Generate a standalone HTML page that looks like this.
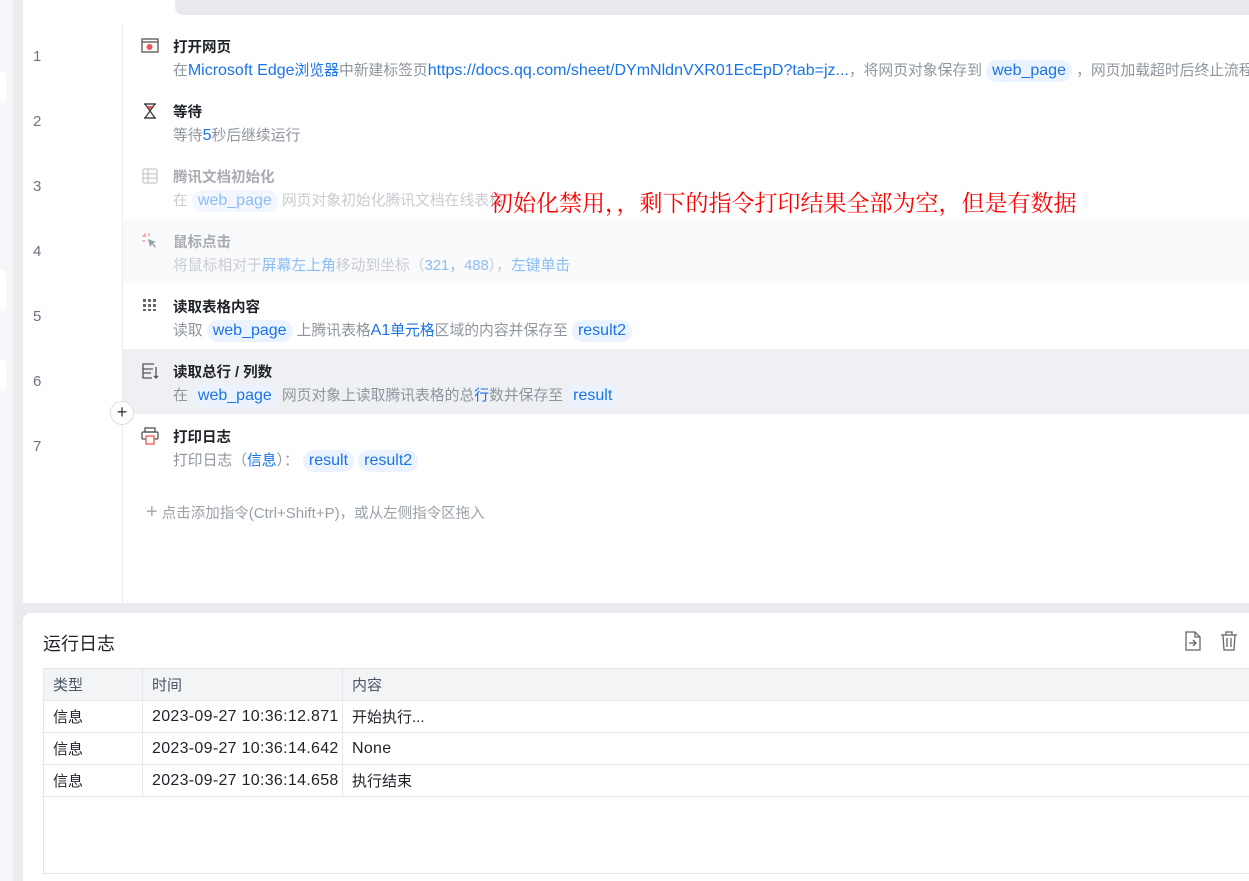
<!DOCTYPE html>
<html><head><meta charset="utf-8">
<style>
*{margin:0;padding:0;box-sizing:border-box}
body{width:1249px;height:881px;overflow:hidden;background:#eaebef;font-family:"Liberation Sans","Noto Sans CJK SC",sans-serif;position:relative}
.strip{position:absolute;left:0;top:0;width:13px;height:881px;background:#f7f7f9}
.strip i{position:absolute;left:0;width:6px;background:#fff;border-radius:0 4px 4px 0}
.main{position:absolute;left:23px;top:0;width:1226px;height:603px;background:#fff}
.topbar{position:absolute;left:152px;top:0;right:0;height:15px;background:#e9eaee;border-radius:0 0 0 8px}
.gut{position:absolute;left:99px;top:24px;width:1px;height:579px;background:#ececef}
.row{position:absolute;left:123px;width:1126px;height:65px}
.num{position:absolute;left:33px;font-size:15px;color:#6b7280}
.ic{position:absolute;left:18px;top:13px;width:18px;height:18px}
.t{position:absolute;left:50px;top:12px;font-size:14.5px;font-weight:bold;color:#1f2329;white-space:nowrap}
.d{position:absolute;left:50px;top:35px;font-size:14.8px;color:#8f959e;white-space:nowrap}
.l{font-size:16px}
.b{color:#1a73e8}
.tag{display:inline-block;background:#eaf3ff;color:#1a73e8;border-radius:11px;padding:0 6px;font-size:16px;line-height:22px}
.dis .t{color:#a8abb2}.dis .d{color:#c8cbd1}.dis .b{color:#8cbcf5}.dis .tag{color:#8cbcf5;background:#f2f7ff}
.log{position:absolute;left:23px;top:613px;width:1226px;height:268px;background:#fff;border-radius:8px 0 0 0}
table{position:absolute;left:20px;top:55px;width:1210px;border-collapse:collapse;font-size:15px;color:#1f2329}
td{border:1px solid #e6e7ea;height:32px;padding-left:9px}
td.n{font-size:16px;letter-spacing:0.3px}
tr.h td{background:#f3f4f6;color:#4b5563}
</style></head><body>
<div class="strip"><i style="top:72px;height:30px"></i><i style="top:270px;height:40px"></i><i style="top:360px;height:30px"></i></div>
<div class="main">
<div class="topbar"></div>
<div class="gut"></div>
</div>
<div class="num" style="top:48px">1</div>
<div class="num" style="top:113px">2</div>
<div class="num" style="top:178px">3</div>
<div class="num" style="top:243px">4</div>
<div class="num" style="top:308px">5</div>
<div class="num" style="top:373px">6</div>
<div class="num" style="top:438px">7</div>

<div class="row" style="top:24px">
<svg class="ic" viewBox="0 0 18 18"><rect x="1" y="2" width="16" height="13" fill="none" stroke="#555" stroke-width="1.3"/><line x1="1" y1="5" x2="17" y2="5" stroke="#555" stroke-width="1.3"/><circle cx="8.5" cy="10" r="3" fill="#e55"/></svg>
<div class="t">打开网页</div>
<div class="d">在<span class="b l">Microsoft Edge</span><span class="b">浏览器</span>中新建标签页<span class="b l">https://docs.qq.com/sheet/DYmNldnVXR01EcEpD?tab=jz...</span>，将网页对象保存到 <span class="tag">web_page</span> ，网页加载超时后终止流程</div>
</div>
<div class="row" style="top:89px">
<svg class="ic" viewBox="0 0 18 18"><path d="M3 2h12M3 16h12M4 2l10 14M14 2L4 16" stroke="#444" stroke-width="1.4" fill="none"/><path d="M6 4h6l-3 4z" fill="#e55"/></svg>
<div class="t">等待</div>
<div class="d">等待<span class="b l">5</span>秒后继续运行</div>
</div>
<div class="row dis" style="top:154px">
<svg class="ic" viewBox="0 0 18 18"><rect x="2" y="2" width="14" height="14" rx="2" fill="none" stroke="#c5c8ce" stroke-width="1.3"/><path d="M2 7h14M2 11h14M7 2v14" stroke="#c5c8ce" stroke-width="1.3"/></svg>
<div class="t">腾讯文档初始化</div>
<div class="d">在 <span class="tag">web_page</span> 网页对象初始化腾讯文档在线表格</div>
</div>
<div class="row dis" style="top:219px;background:#f9fafb">
<svg class="ic" viewBox="0 0 18 18"><path d="M4 1v4M1 4h4M1 9h3M8 1v3" stroke="#f29a9a" stroke-width="1.3"/><path d="M7 7l8 3-3 1 3 4-1 1-3-4-2 3z" fill="#9aa0a8"/></svg>
<div class="t">鼠标点击</div>
<div class="d">将鼠标相对于<span class="b">屏幕左上角</span>移动到坐标（<span class="b">321，488</span>），<span class="b">左键单击</span></div>
</div>
<div class="row" style="top:284px">
<svg class="ic" viewBox="0 0 18 18" fill="#666"><rect x="2" y="2" width="3" height="3"/><rect x="7" y="2" width="3" height="3"/><rect x="12" y="2" width="3" height="3"/><rect x="2" y="7" width="3" height="3"/><rect x="7" y="7" width="3" height="3"/><rect x="12" y="7" width="3" height="3"/><rect x="2" y="12" width="3" height="2"/><rect x="7" y="12" width="3" height="2"/><rect x="12" y="12" width="3" height="2"/></svg>
<div class="t">读取表格内容</div>
<div class="d">读取 <span class="tag">web_page</span> 上腾讯表格<span class="b l">A1</span><span class="b">单元格</span>区域的内容并保存至 <span class="tag">result2</span></div>
</div>
<div class="row" style="top:349px;background:#eff0f3">
<svg class="ic" viewBox="0 0 18 18"><path d="M13 2H2v14h9M2 7h10M2 11h8M15 5v11M13 14l2 2 2-2" stroke="#555" stroke-width="1.3" fill="none"/></svg>
<div class="t">读取总行 / 列数</div>
<div class="d">在 <span class="tag">web_page</span> 网页对象上读取腾讯表格的总<span class="b">行</span>数并保存至 <span class="tag">result</span></div>
</div>
<div class="row" style="top:414px">
<svg class="ic" viewBox="0 0 18 18"><rect x="4" y="1" width="10" height="4" fill="none" stroke="#555" stroke-width="1.3"/><rect x="1" y="5" width="16" height="7" rx="1" fill="none" stroke="#555" stroke-width="1.3"/><rect x="5" y="9" width="8" height="8" fill="#fff" stroke="#e55" stroke-width="1.3"/></svg>
<div class="t">打印日志</div>
<div class="d">打印日志（<span class="b">信息</span>）： <span class="tag">result</span> <span class="tag">result2</span></div>
</div>
<div style="position:absolute;left:110px;top:401px;width:24px;height:24px;border:1px solid #ddd;border-radius:50%;background:#fff;text-align:center;line-height:21px;font-size:18px;color:#333">+</div>
<div style="position:absolute;left:146px;top:501px;font-size:14.5px;color:#9aa0a8;white-space:nowrap"><span style="font-size:20px;color:#aaa">+</span> 点击添加指令<span style="font-size:15px">(Ctrl+Shift+P)</span>，或从左侧指令区拖入</div>
<div style="position:absolute;left:490px;top:185px;font-family:'Noto Serif CJK SC','Liberation Serif',serif;font-size:23px;color:#f00;white-space:nowrap">初始化禁用，，剩下的指令打印结果全部为空，但是有数据</div>

<div class="log">
<div style="position:absolute;left:20px;top:17px;font-size:18px;color:#1f2329">运行日志</div>
<svg style="position:absolute;left:1161px;top:18px" width="18" height="20" viewBox="0 0 18 20"><path d="M2 1h9l5 5v13H2z M11 1v5h5" fill="none" stroke="#666" stroke-width="1.3"/><path d="M5 12h7M9 9l3 3-3 3" fill="none" stroke="#666" stroke-width="1.3"/></svg>
<svg style="position:absolute;left:1197px;top:18px" width="18" height="20" viewBox="0 0 18 20"><path d="M1 4h16M6 4V1h6v3M3 4l1 15h10l1-15M7 7v9M11 7v9" fill="none" stroke="#666" stroke-width="1.3"/></svg>
<table>
<tr class="h"><td style="width:99px">类型</td><td style="width:200px">时间</td><td>内容</td></tr>
<tr><td>信息</td><td class="n">2023-09-27 10:36:12.871</td><td>开始执行...</td></tr>
<tr><td>信息</td><td class="n">2023-09-27 10:36:14.642</td><td class="n">None</td></tr>
<tr><td>信息</td><td class="n">2023-09-27 10:36:14.658</td><td>执行结束</td></tr>
<tr><td colspan="3" style="height:77px;border-top:1px solid #e6e7ea"></td></tr>
</table>
</div>
</body></html>
